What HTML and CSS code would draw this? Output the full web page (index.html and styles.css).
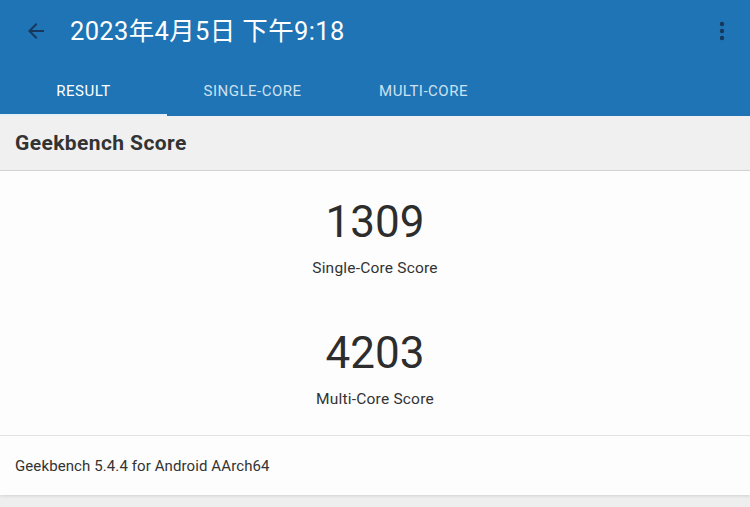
FILE: index.html
```html
<!DOCTYPE html>
<html lang="zh">
<head>
<meta charset="utf-8">
<title>Geekbench Result</title>
<link rel="stylesheet" href="styles.css">
</head>
<body>
<header class="header">
  <div class="appbar">
    <svg class="back" width="24" height="24" viewBox="0 0 24 24"><path d="M20 11H7.83l5.59-5.59L12 4l-8 8 8 8 1.41-1.41L7.83 13H20v-2z" fill="#17385a"/></svg>
    <h1 class="title">2023年4月5日 下午9:18</h1>
    <div class="spacer"></div>
    <svg class="menu" width="10" height="24" viewBox="0 0 10 24"><circle cx="5" cy="5" r="2.2" fill="#17385a"/><circle cx="5" cy="12" r="2.2" fill="#17385a"/><circle cx="5" cy="19" r="2.2" fill="#17385a"/></svg>
  </div>
  <nav class="tabs">
    <div class="tab active">RESULT</div>
    <div class="tab">SINGLE-CORE</div>
    <div class="tab">MULTI-CORE</div>
  </nav>
</header>
<section class="section-head">Geekbench Score</section>
<main class="card">
  <div class="scores">
    <div class="score">
      <div class="num">1309</div>
      <div class="label">Single-Core Score</div>
    </div>
    <div class="score">
      <div class="num">4203</div>
      <div class="label">Multi-Core Score</div>
    </div>
  </div>
  <div class="footer">Geekbench 5.4.4 for Android AArch64</div>
</main>
</body>
</html>
```
FILE: styles.css
```css
html, body {
  margin: 0;
  padding: 0;
}
body {
  width: 750px;
  height: 507px;
  overflow: hidden;
  background: #eeeeee;
  font-family: Roboto, "Noto Sans CJK SC", sans-serif;
  color: #333333;
}
.header {
  background: #1e74b5;
  height: 116px;
  display: flex;
  flex-direction: column;
}
.appbar {
  height: 62px;
  display: flex;
  align-items: center;
  padding: 0 23px 0 24px;
}
.back {
  display: block;
}
.title {
  margin: 0 0 0 22px;
  font-weight: 400;
  font-size: 25.5px;
  color: #ffffff;
  letter-spacing: 0.35px;
  line-height: 30px;
  font-family: Roboto, "Noto Sans CJK SC", sans-serif;
}
.spacer {
  flex: 1;
}
.menu {
  display: block;
}
.tabs {
  height: 54px;
  display: flex;
}
.tab {
  width: 171px;
  display: flex;
  align-items: center;
  justify-content: center;
  font-size: 15px;
  color: #cde1f1;
  letter-spacing: 0.5px;
  box-sizing: border-box;
  padding-top: 4px;
}
.tab.active {
  color: #ffffff;
  border-bottom: 2px solid #e4eef6;
  padding-top: 6px;
  width: 167px;
}
.section-head {
  height: 55px;
  box-sizing: border-box;
  background: #f0f0f0;
  border-bottom: 1px solid #d6d6d6;
  display: flex;
  align-items: center;
  padding: 0 15px;
  font-size: 21px;
  font-weight: 700;
  letter-spacing: 0.4px;
  color: #333333;
}
.card {
  background: #fdfdfd;
  box-shadow: 0 1px 3px rgba(0, 0, 0, 0.12);
}
.scores {
  height: 264px;
  border-bottom: 1px solid #e2e2e2;
}
.score {
  padding-top: 26px;
  height: 105px;
  display: flex;
  flex-direction: column;
  align-items: center;
}
.num {
  font-size: 44px;
  line-height: 50px;
  font-weight: 400;
  color: #2d2d2d;
}
.label {
  margin-top: 11px;
  font-size: 15.5px;
  letter-spacing: 0.2px;
  line-height: 20px;
  color: #333333;
}
.footer {
  height: 59px;
  display: flex;
  align-items: center;
  padding: 0 15px;
  font-size: 15px;
  letter-spacing: 0.1px;
  color: #333333;
}
```
